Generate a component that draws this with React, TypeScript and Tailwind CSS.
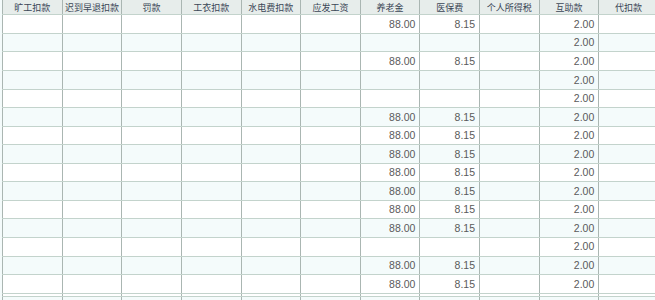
const headers = [
  "旷工扣款",
  "迟到早退扣款",
  "罚款",
  "工衣扣款",
  "水电费扣款",
  "应发工资",
  "养老金",
  "医保费",
  "个人所得税",
  "互助款",
  "代扣款",
];

// true = 养老金/医保费 filled, false = only 互助款
const rows = [true, false, true, false, false, true, true, true, true, true, true, true, false, true, true];

export default function App() {
  return (
    <div className="w-[655px] h-[300px] overflow-hidden bg-[#f4fbfb] font-['Liberation_Sans','Noto_Sans_CJK_SC',sans-serif]">
      <div className="ml-[2px] w-[656px]">
        <div className="grid grid-cols-[repeat(11,59.63px)] h-[15.4px] bg-[#e7edeb] border-b border-[#c3d3cc]">
          {headers.map((h) => (
            <div
              key={h}
              className="border-l border-[#aab6b2] flex items-center justify-center whitespace-nowrap overflow-hidden text-[9px] leading-none text-[#3a4656] font-['Noto_Sans_CJK_SC',sans-serif]"
            >
              {h}
            </div>
          ))}
        </div>
        {rows.map((full, i) => (
          <div
            key={i}
            className={`grid grid-cols-[repeat(11,59.63px)] h-[18.55px] border-b border-[#c3d3cc] ${
              i % 2 === 0 ? "bg-white" : "bg-[#f4fbfb]"
            }`}
          >
            {headers.map((h, c) => {
              let v = "";
              if (c === 6 && full) v = "88.00";
              if (c === 7 && full) v = "8.15";
              if (c === 9) v = "2.00";
              return (
                <div
                  key={h}
                  className="border-l border-[#aab6b2] flex items-center justify-end pr-[4px] text-[10.5px] leading-none text-[#5a5a5a]"
                >
                  {v}
                </div>
              );
            })}
          </div>
        ))}
        <div className="grid grid-cols-[repeat(11,59.63px)] h-[3px] bg-white border-b border-[#c3d3cc]">
          {headers.map((h) => (
            <div key={h} className="border-l border-[#aab6b2]" />
          ))}
        </div>
        <div className="grid grid-cols-[repeat(11,59.63px)] h-[10px]">
          {headers.map((h) => (
            <div key={h} className="border-l border-[#aab6b2]" />
          ))}
        </div>
      </div>
    </div>
  );
}
